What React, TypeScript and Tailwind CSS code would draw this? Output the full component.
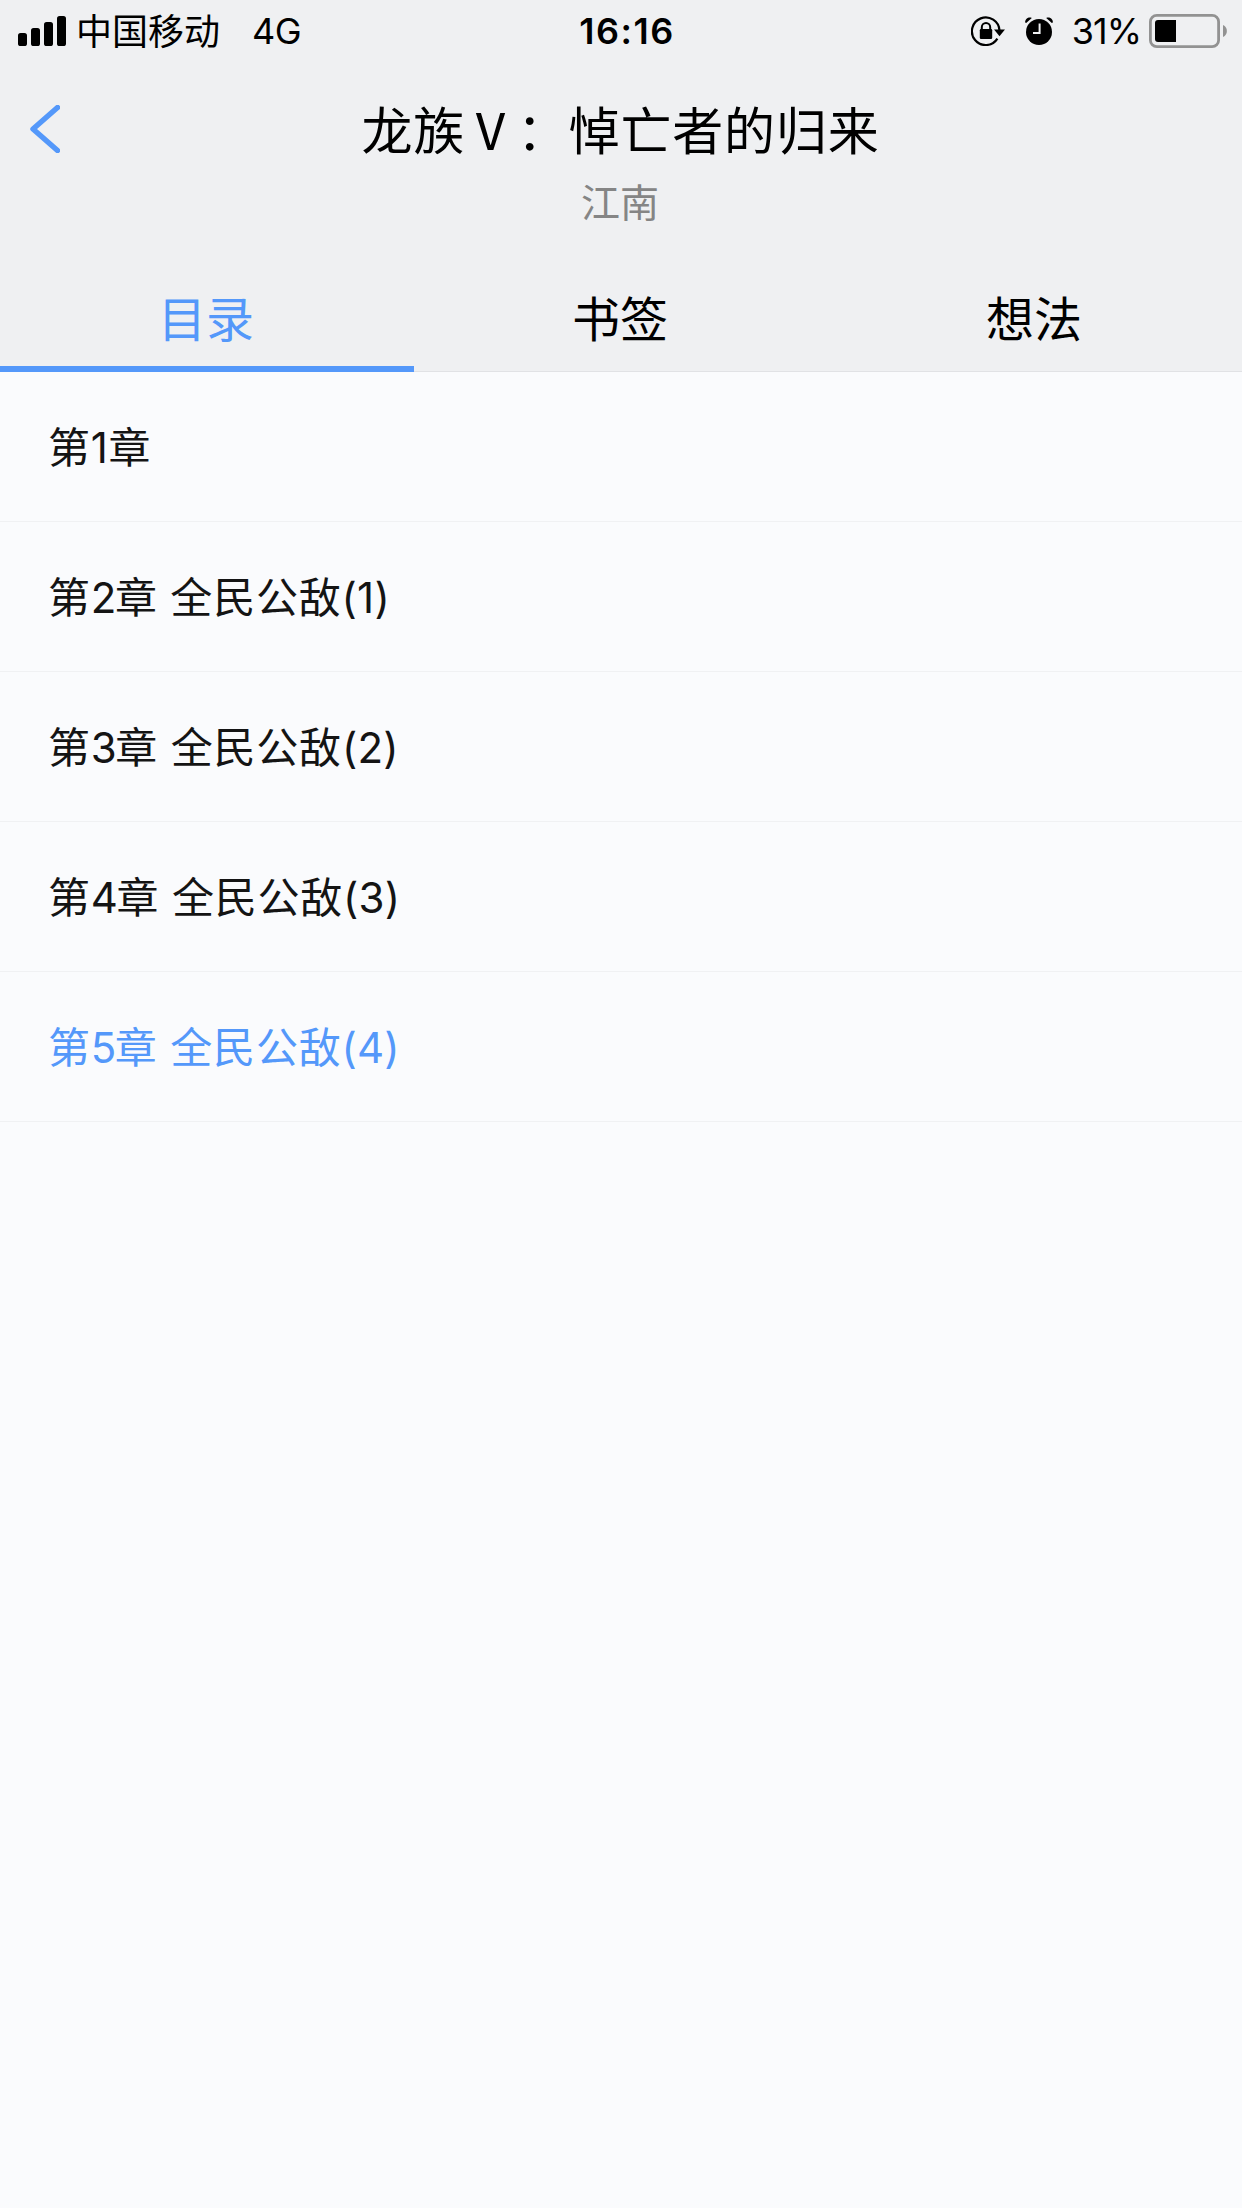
import type { ReactNode } from "react";

const chapters = [
  { number: 1, name: "", part: "" },
  { number: 2, name: " 全民公敌", part: "(1)" },
  { number: 3, name: " 全民公敌", part: "(2)" },
  { number: 4, name: " 全民公敌", part: "(3)" },
  { number: 5, name: " 全民公敌", part: "(4)", active: true },
];

function SignalIcon() {
  return (
    <svg width="48" height="30" viewBox="0 0 48 30" fill="#000">
      <rect x="0" y="17" width="9" height="13" rx="2.6" />
      <rect x="13" y="12" width="9" height="18" rx="2.6" />
      <rect x="26" y="6" width="9" height="24" rx="2.6" />
      <rect x="39" y="0" width="9" height="30" rx="2.6" />
    </svg>
  );
}

function RotationLockIcon() {
  return (
    <svg width="34" height="30" viewBox="0 0 34 30" fill="none">
      <path d="M26.4 22.6A13.8 13.8 0 1 1 28.5 14.6" stroke="#000" strokeWidth="2.2" />
      <path d="M23 13.6H34L28.5 20.2Z" fill="#000" />
      <rect x="8.8" y="13" width="12.4" height="10" rx="1.2" fill="#000" />
      <path d="M10.8 14V11.2a4.2 4.2 0 0 1 8.4 0V14" stroke="#000" strokeWidth="2" />
    </svg>
  );
}

function AlarmIcon() {
  return (
    <svg width="28" height="28" viewBox="0 0 28 28" fill="none">
      <circle cx="14" cy="15" r="13" fill="#000" />
      <path d="M0.2 5.6C-0.2 2.2 3.2 -0.4 6.8 0.9L1.2 6Z" fill="#000" />
      <path d="M27.8 5.6C28.2 2.2 24.8 -0.4 21.2 0.9L26.8 6Z" fill="#000" />
      <path d="M14.6 6.5V16H8" stroke="#eff0f2" strokeWidth="2" />
    </svg>
  );
}

function BatteryIcon() {
  return (
    <svg width="78" height="34" viewBox="0 0 78 34" fill="none">
      <rect x="1.4" y="1.4" width="68.2" height="31.2" rx="6.4" stroke="#929292" strokeWidth="2.8" />
      <path d="M9 6H27V28H9A3 3 0 0 1 6 25V9A3 3 0 0 1 9 6Z" fill="#000" />
      <path d="M74 11A6.6 6.6 0 0 1 74 23Z" fill="#929292" />
    </svg>
  );
}

function StatusBar() {
  return (
    <div className="grid h-[60px] grid-cols-3 items-center text-[36px] leading-[60px] text-black">
      <div className="flex items-center pl-[18px]">
        <SignalIcon />
        <span className="ml-[10px] pt-[2px]">中国移动</span>
        <span className="ml-8 tracking-[-0.5px]">4G</span>
      </div>
      <div className="pl-3 text-center font-semibold tracking-[1.5px]">16:16</div>
      <div className="flex items-center justify-end pr-[15px]">
        <RotationLockIcon />
        <span className="ml-5">
          <AlarmIcon />
        </span>
        <span className="ml-[19px] tracking-[-1px]">31%</span>
        <span className="ml-2">
          <BatteryIcon />
        </span>
      </div>
    </div>
  );
}

function Tab({ active, children }: { active?: boolean; children: ReactNode }) {
  return (
    <button
      className={
        active
          ? "border-b-[6px] border-[#5498fa] pt-[10px] pr-[2px] text-[#5498fa]"
          : "border-b border-[#e1e2e5] pt-[10px] pr-[2px] pb-[5px] text-black"
      }
    >
      {children}
    </button>
  );
}

export default function App() {
  return (
    <div className="min-h-[2208px] w-[1242px] bg-[#fafbfd] font-[Inter,'Noto_Sans_CJK_SC',sans-serif]">
      <header className="flex h-[372px] flex-col bg-[#eff0f2]">
        <StatusBar />
        <div className="grid h-[204px] grid-cols-[90px_1fr_90px]">
          <button className="self-start pt-[45px] pl-[30px]" aria-label="返回">
            <svg width="30" height="48" viewBox="0 0 30 48" fill="none">
              <path
                d="M27.5 2.5L3 24L27.5 45.5"
                stroke="#5498fa"
                strokeWidth="5.4"
                strokeLinecap="round"
                strokeLinejoin="round"
              />
            </svg>
          </button>
          <div className="flex flex-col items-center pt-[34px]">
            <h1 className="pr-px font-['Noto_Sans_CJK_SC',sans-serif] text-[51px] leading-[68px] tracking-[0.8px] whitespace-nowrap text-black">
              龙族Ⅴ：悼亡者的归来
            </h1>
            <p className="mt-[14px] pr-[2px] text-[39px] leading-[54px] text-[#858585]">江南</p>
          </div>
        </div>
        <nav className="grid h-[108px] grid-cols-3 text-[48px] leading-[60px]">
          <Tab active>目录</Tab>
          <Tab>书签</Tab>
          <Tab>想法</Tab>
        </nav>
      </header>
      <ul>
        {chapters.map((c) => (
          <li
            key={c.number}
            className={
              "flex h-[150px] items-center border-b border-[#f0f1f3] pt-px pl-12 text-[42px] tracking-[0.8px] " +
              (c.active ? "text-[#5498fa]" : "text-[#141414]")
            }
          >
            <span className="whitespace-pre">
              第
              <span className={c.number === 1 ? "tracking-[0.5px]" : "tracking-[-1.5px]"}>
                {c.number}
              </span>
              章{c.name}
              <span className="tracking-[0.2px]">{c.part}</span>
            </span>
          </li>
        ))}
      </ul>
    </div>
  );
}
